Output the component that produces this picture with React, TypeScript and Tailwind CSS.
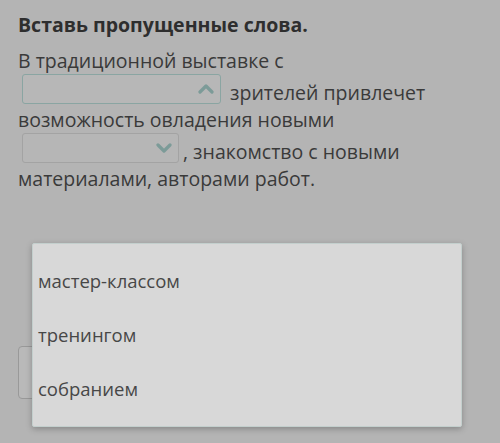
import React from "react";

function ChevronUp() {
  return (
    <svg width="16" height="12" viewBox="0 0 16 12" className="text-[#7c9b98]">
      <path d="M2 9 L8 3 L14 9" fill="none" stroke="currentColor" strokeWidth="3.2" strokeLinecap="round" strokeLinejoin="round" />
    </svg>
  );
}

function ChevronDown() {
  return (
    <svg width="16" height="12" viewBox="0 0 16 12" className="text-[#7c9b98]">
      <path d="M2 3 L8 9 L14 3" fill="none" stroke="currentColor" strokeWidth="3.2" strokeLinecap="round" strokeLinejoin="round" />
    </svg>
  );
}

export default function App() {
  return (
    <div
      className="relative w-[500px] h-[443px] overflow-hidden bg-[#b4b4b4] text-[#3a3a3a]"
      style={{ fontFamily: '"Open Sans", "Noto Sans", sans-serif' }}
    >
      <div className="pl-[18px] pr-[20px] pt-[11px]">
        <h1 className="text-[19.5px] font-bold leading-[27px] text-[#2e2e2e]">Вставь пропущенные слова.</h1>
        <p className="mt-[9px] text-[19.5px] leading-[27px]">
          В традиционной выставке с{" "}
          <span className="mx-1 inline-block h-[30px] w-[199px] overflow-hidden rounded-[3px] border-[1.5px] border-[#8aa5a2] bg-[#b7b7b7] align-[-4px]">
            <span className="flex h-full items-center justify-end pr-[6px]">
              <ChevronUp />
            </span>
          </span>{" "}
          зрителей привлечет возможность овладения новыми{" "}
          <span className="mx-1 inline-block h-[30px] w-[157px] overflow-hidden rounded-[3px] border border-[#a3a3a3] bg-[#b6b6b6] align-[-4px]">
            <span className="flex h-full items-center justify-end pr-[6px]">
              <ChevronDown />
            </span>
          </span>
          , знакомство с новыми материалами, авторами работ.
        </p>
        <div className="mt-[154px] h-[53px] w-[160px] rounded-[4px] border border-[#999999] bg-[#b9b9b9]" />
      </div>

      <div className="absolute left-[32px] top-[243px] w-[430px] rounded-[2px] border border-[#c3cfcd] bg-[#d8d8d8] py-[10px] shadow-[0_2px_6px_rgba(0,0,0,0.25)]">
        {["мастер-классом", "тренингом", "собранием"].map((t) => (
          <div key={t} className="flex h-[54px] items-center pl-[5px] text-[18.5px] text-[#474747]">
            {t}
          </div>
        ))}
      </div>
    </div>
  );
}
